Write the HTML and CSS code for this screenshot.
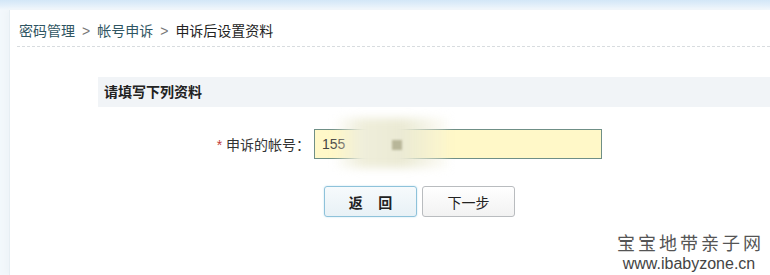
FILE: index.html
```html
<!DOCTYPE html>
<html>
<head>
<meta charset="utf-8">
<link rel="stylesheet" href="styles.css">
</head>
<body>
<div class="page">
  <div class="panel">
    <div class="crumbs">
      <span class="link">密码管理</span><span class="sep">&gt;</span><span class="link">帐号申诉</span><span class="sep">&gt;</span><span class="current">申诉后设置资料</span>
    </div>
    <div class="section">请填写下列资料</div>
    <div class="row">
      <label class="label"><span class="star">*</span> 申诉的帐号：</label>
      <div class="input"><span class="num">155</span><span class="blur"></span><span class="blur2"></span></div>
    </div>
    <div class="buttons">
      <button class="btn btn-back">返&nbsp;&nbsp;&nbsp;&nbsp;回</button>
      <button class="btn">下一步</button>
    </div>
    <div class="mark">
      <div class="mark-cn">宝宝地带亲子网</div>
      <div class="mark-en">www.ibabyzone.cn</div>
    </div>
  </div>
</div>
</body>
</html>
```
FILE: styles.css
```css
html, body {
  margin: 0;
  padding: 0;
  width: 770px;
  height: 275px;
  overflow: hidden;
  font-family: "Liberation Sans", "Noto Sans CJK SC", sans-serif;
}
.page {
  height: 275px;
  background: linear-gradient(to bottom, #d3e7f7 0px, #e4f0fa 6px, #f3f8fc 10px, #f3f8fc 100%);
  padding-top: 10px;
  padding-left: 9px;
  box-sizing: border-box;
}
.panel {
  position: relative;
  background: #fff;
  height: 100%;
  border-left: 1px solid #e6eef3;
  box-shadow: -4px 0 6px #eef4f8;
}
.crumbs {
  margin-left: 7px;
  padding: 13px 0 7px 2px;
  border-bottom: 1px dashed #d8dcdf;
  font-size: 14px;
  line-height: 16px;
  color: #333;
}
.link { color: #2f5562; }
.sep {
  color: #777;
  margin: 0 7px;
  font-family: "Liberation Sans", sans-serif;
}
.current { color: #222; }
.section {
  margin: 30px 0 0 88px;
  height: 30px;
  line-height: 30px;
  background: #f1f4f7;
  padding-left: 6px;
  font-size: 14px;
  font-weight: bold;
  color: #222;
}
.row {
  display: flex;
  align-items: center;
  margin-top: 22px;
}
.label {
  width: 300px;
  text-align: right;
  font-size: 14px;
  color: #333;
}
.star { color: #c23a3a; }
.input {
  position: relative;
  margin-left: 4px;
  width: 286px;
  height: 28px;
  border: 1px solid #6f8f86;
  background: #fff8c8;
  display: flex;
  align-items: center;
  font-size: 14px;
  color: #444;
}
.num {
  margin-left: 7px;
}
.blur {
  position: absolute;
  left: 18px;
  top: -12px;
  width: 115px;
  height: 50px;
  background: linear-gradient(to right, rgba(245,244,225,0.0), #efeedb 25%, #ebead4 60%, rgba(245,244,222,0.2));
  filter: blur(4px);
}
.blur2 {
  position: absolute;
  left: 77px;
  top: 10px;
  width: 10px;
  height: 10px;
  background: #b8b699;
  filter: blur(1px);
}
.buttons {
  display: flex;
  margin: 27px 0 0 314px;
  gap: 5px;
}
.btn {
  width: 93px;
  height: 31px;
  border: 1px solid #b9bcbf;
  border-radius: 3px;
  background: linear-gradient(to bottom, #ffffff, #f2f2f2);
  font-family: "Liberation Sans", "Noto Sans CJK SC", sans-serif;
  font-size: 14px;
  color: #222;
  padding: 0;
}
.btn-back {
  border-color: #8ec2da;
  background: linear-gradient(to bottom, #f6fafc, #e8f1f6);
  font-weight: bold;
  box-shadow: 0 0 2px #bfe0ef;
}
.mark {
  position: absolute;
  right: 9px;
  bottom: 2px;
  text-align: center;
  color: #555;
}
.mark-cn {
  font-size: 18px;
  letter-spacing: 3px;
  line-height: 22px;
  margin-right: -3px;
}
.mark-en {
  font-size: 16px;
  line-height: 18px;
  color: #444;
}
```
